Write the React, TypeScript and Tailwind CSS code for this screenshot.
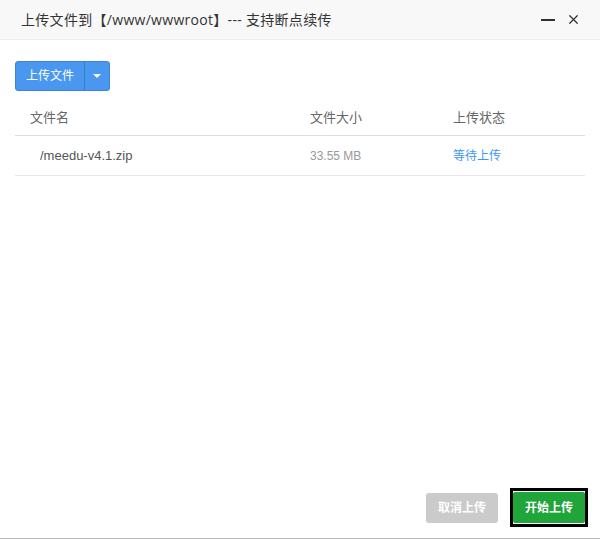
import { X } from 'lucide-react';

const font = { fontFamily: '"Liberation Sans", "Noto Sans CJK SC", sans-serif' };

export default function App() {
  return (
    <div
      className="w-[600px] h-[539px] bg-white flex flex-col border-b border-[#b8b8b8] text-[#333]"
      style={font}
    >
      {/* title bar */}
      <div className="h-[40px] shrink-0 bg-[#f8f8f8] border-b border-[#eee] flex items-center justify-between pl-[21px] pr-[19px]">
        <span className="text-sm text-[#333] tracking-[0.3px] font-['Open_Sans','Noto_Sans_CJK_SC',sans-serif]">
          上传文件到【/www/wwwroot】--- 支持断点续传
        </span>
        <div className="flex items-center gap-[11px]">
          <span className="block w-[14px] h-[2px] bg-[#2f2f3a]" />
          <X className="w-[15px] h-[15px] text-[#2f2f3a]" strokeWidth={2} />
        </div>
      </div>

      <div className="px-[15px] pt-[21px]">
        {/* upload button */}
        <div className="inline-flex h-[30px] rounded-[3px] border border-[#3a86d8] bg-[#4a97ef] overflow-hidden">
          <button className="px-[10px] text-xs text-white leading-none">上传文件</button>
          <span className="w-[25px] border-l border-[#3a7cc4] flex items-center justify-center">
            <span className="w-0 h-0 border-l-[4px] border-r-[4px] border-t-[4px] border-l-transparent border-r-transparent border-t-white" />
          </span>
        </div>

        {/* table */}
        <div className="mt-[10px]">
          <div className="grid grid-cols-[295px_143px_1fr] h-[35px] items-center border-b border-[#ddd] text-[13px] text-[#666]">
            <span className="pl-[15px]">文件名</span>
            <span>文件大小</span>
            <span>上传状态</span>
          </div>
          <div className="grid grid-cols-[295px_143px_1fr] h-[40px] items-center border-b border-[#e8e8e8]">
            <span className="pl-[25px] text-[13px] text-[#555]">/meedu-v4.1.zip</span>
            <span className="text-xs text-[#999]">33.55 MB</span>
            <span className="text-xs text-[#3d97ee]">等待上传</span>
          </div>
        </div>
      </div>

      <div className="flex-1" />

      {/* footer buttons */}
      <div className="flex items-center justify-end gap-[12px] pr-[12px] pb-[11px]">
        <button className="w-[72px] h-[30px] rounded-[3px] bg-[#cbcbcb] text-xs font-bold text-white">
          取消上传
        </button>
        <div className="border-[3px] border-black bg-white py-[1px]">
          <button className="block w-[72px] h-[31px] rounded-[2px] bg-[#20a53a] text-xs font-bold text-white">
            开始上传
          </button>
        </div>
      </div>
    </div>
  );
}
